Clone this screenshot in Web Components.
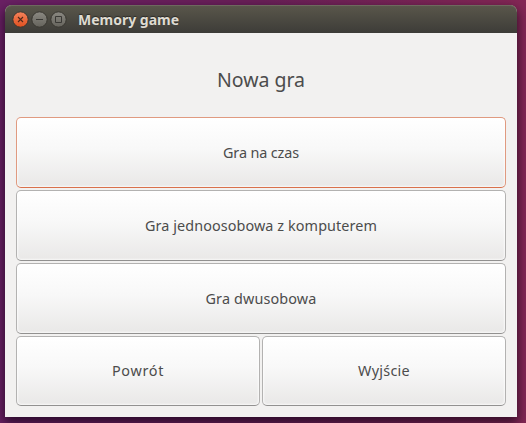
<!DOCTYPE html>
<html lang="pl">
<head>
<meta charset="utf-8">
<title>Memory game</title>
<style>
html,body{margin:0;height:100%}
body{overflow:hidden;font-family:"Noto Sans","Open Sans",sans-serif;color:#4c4c4c}
</style>
</head>
<body>
<desktop-area>
  <app-window>
    <title-bar slot="bar"><fit-text width="101">Memory game</fit-text></title-bar>
    <game-menu>
      <fit-text slot="heading" width="88">Nowa gra</fit-text>
      <menu-button focused><fit-text width="76">Gra na czas</fit-text></menu-button>
      <menu-button><fit-text width="232">Gra jednoosobowa z komputerem</fit-text></menu-button>
      <menu-button><fit-text width="111">Gra dwusobowa</fit-text></menu-button>
      <menu-button half><fit-text width="52">Powrót</fit-text></menu-button>
      <menu-button half><fit-text width="52">Wyjście</fit-text></menu-button>
    </game-menu>
  </app-window>
</desktop-area>
<script>
const define = (name, html, ready) => customElements.define(name, class extends HTMLElement {
  constructor() {
    super();
    this.attachShadow({ mode: 'open' }).innerHTML = html;
  }
  connectedCallback() { if (ready) ready(this); }
});

define('desktop-area', `<style>
:host{display:block;box-sizing:border-box;width:526px;height:423px;padding:5px 9px 6px 5px;overflow:hidden;
background:linear-gradient(90deg,#6a2064 0%,#6a2058 50%,#842755 100%)}
</style><slot></slot>`);

define('app-window', `<style>
:host{display:flex;flex-direction:column;width:512px;height:412px;border-radius:7px 7px 0 0;background:#f2f1f0;
box-shadow:0 5px 11px 1px rgba(10,0,15,.65)}
slot:not([name]){display:flex;flex:1}
</style><slot name="bar"></slot><slot></slot>`);

define('title-bar', `<style>
:host{display:flex;align-items:center;box-sizing:border-box;height:28px;padding-left:7px;gap:2px;border-radius:7px 7px 0 0;
background:linear-gradient(#5a574b,#3d3c38);box-shadow:inset 0 1px #6d6a5e;
font-size:14px;font-weight:700;color:#dfdbd2;text-shadow:0 -1px 1px #2b2a26}
svg{display:block;width:17px;height:17px}
slot{display:block;margin-left:9px;padding-top:1px}
</style>
<svg viewBox="0 0 17 17"><defs><linearGradient id="o" x2="0" y2="1"><stop stop-color="#f4835c"/><stop offset="1" stop-color="#e0501f"/></linearGradient></defs>
<circle cx="8.5" cy="8.5" r="7.7" fill="url(#o)" stroke="#383630"/><path d="M6 6l5 5M11 6l-5 5" stroke="#50291a" stroke-width="1.1"/></svg>
<svg viewBox="0 0 17 17"><defs><linearGradient id="g" x2="0" y2="1"><stop stop-color="#8b8982"/><stop offset="1" stop-color="#65635c"/></linearGradient></defs>
<circle cx="8.5" cy="8.5" r="7.7" fill="url(#g)" stroke="#383630"/><path d="M5 8.5h7" stroke="#3a3935"/></svg>
<svg viewBox="0 0 17 17"><defs><linearGradient id="h" x2="0" y2="1"><stop stop-color="#8b8982"/><stop offset="1" stop-color="#65635c"/></linearGradient></defs>
<circle cx="8.5" cy="8.5" r="7.7" fill="url(#h)" stroke="#383630"/><path d="M5.5 5.5h6v6h-6z" fill="none" stroke="#3a3935"/></svg>
<slot></slot>`);

define('game-menu', `<style>
:host{display:grid;flex:1;box-sizing:border-box;padding:0 11px;grid-template-columns:244px 244px;
grid-template-rows:82px 71px 71px 71px 70px;gap:2px}
header{grid-column:1/-1;display:flex;justify-content:center;align-items:center;padding-top:11px;font-size:19.5px}
</style><header><slot name="heading"></slot></header><slot></slot>`);

define('menu-button', `<style>
:host{display:block;grid-column:1/-1}
:host([half]){grid-column:auto}
button{display:flex;align-items:center;justify-content:center;box-sizing:border-box;width:100%;height:100%;margin:0;padding:0;
border:1px solid #b3b2b1;border-bottom-color:#929190;border-radius:5px;
background:linear-gradient(#fff,#f8f8f8 45%,#e9e8e7);box-shadow:inset 0 0 2px 1px rgba(255,255,255,.7);
font:14.4px "Noto Sans","Open Sans",sans-serif;color:#4c4c4c}
:host([half]) button{padding-bottom:2px}
:host([focused]) button{border-color:#e09a80;border-bottom-color:#d9714c}
</style><button type="button"><slot></slot></button>`);

/* Spreads its letters evenly so that the label takes the requested width. */
define('fit-text', `<style>
:host{display:inline-block;white-space:nowrap}
span{display:inline-block}
</style><span><slot></slot></span>`, el => {
  const span = el.shadowRoot.querySelector('span');
  const extra = Number(el.getAttribute('width')) - span.getBoundingClientRect().width;
  span.style.letterSpacing = extra / el.textContent.length + 'px';
});
</script>
</body>
</html>
